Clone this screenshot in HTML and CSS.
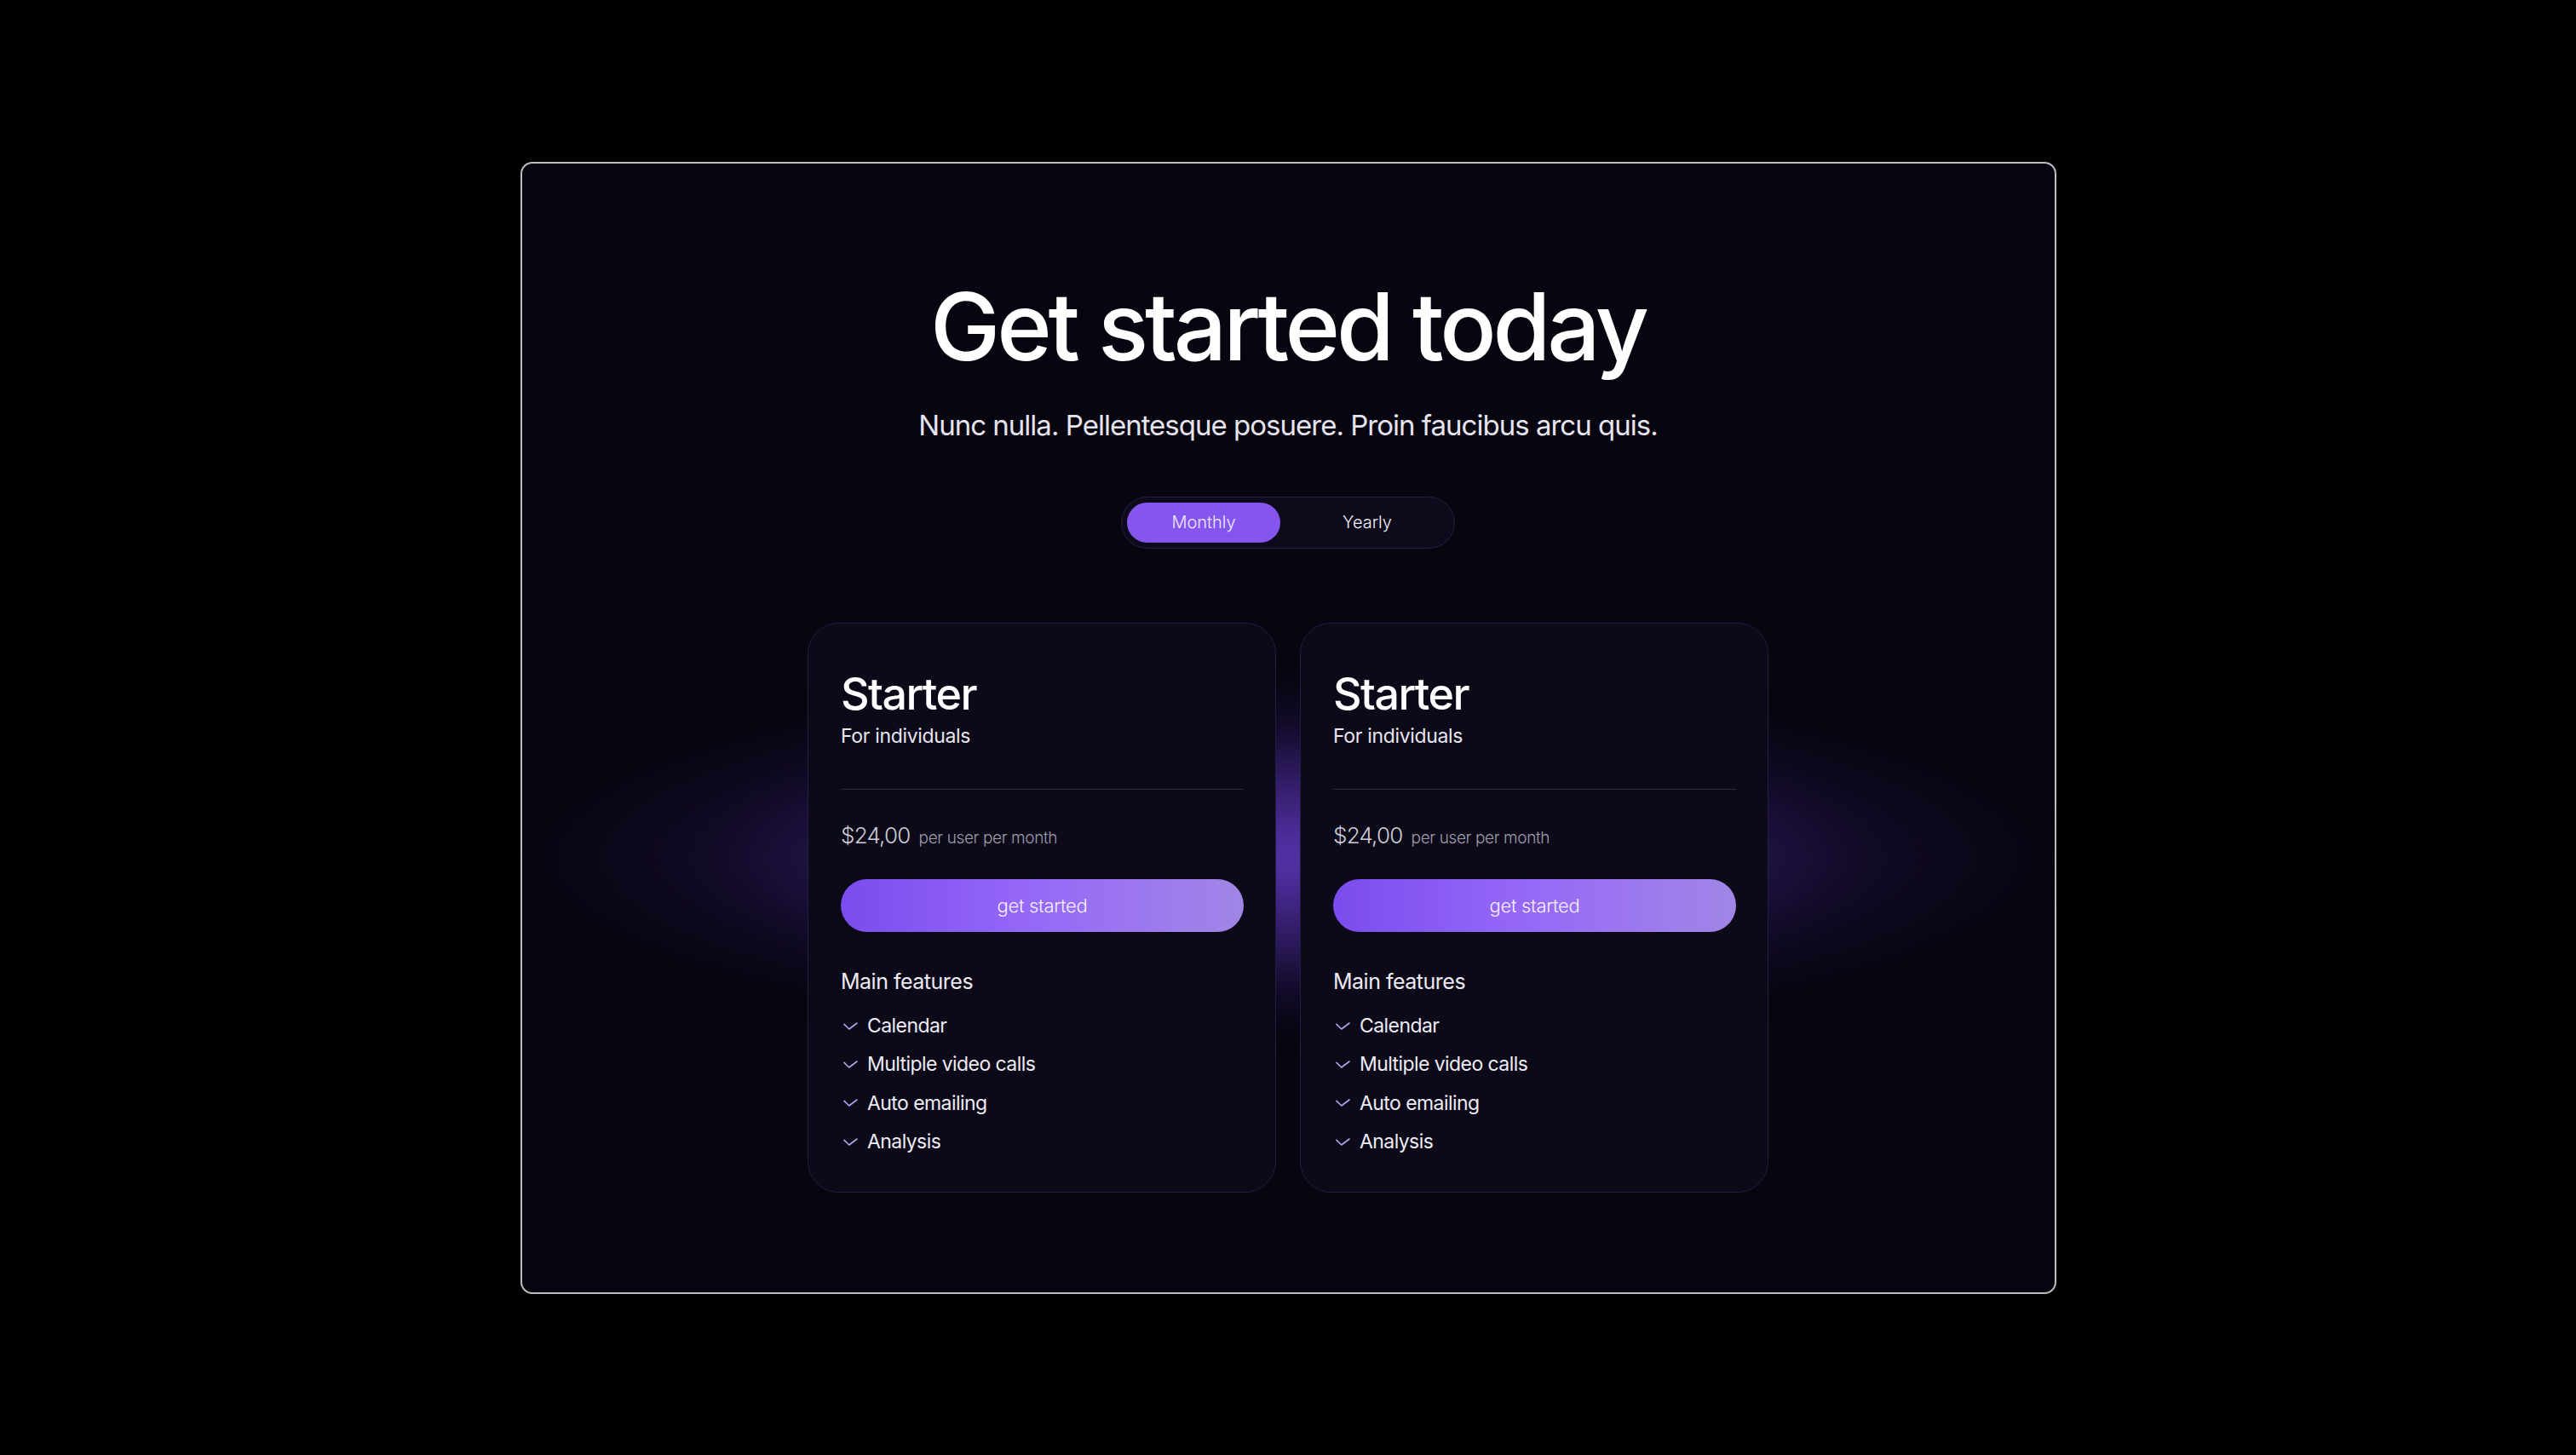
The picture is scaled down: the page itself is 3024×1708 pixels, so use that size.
FILE: index.html
```html
<!DOCTYPE html>
<html lang="en">
<head>
<meta charset="utf-8">
<title>Pricing</title>
<link rel="stylesheet" href="styles.css">
</head>
<body>
<main class="frame">
  <h1 class="title">Get started today</h1>
  <p class="subtitle">Nunc nulla. Pellentesque posuere. Proin faucibus arcu quis.</p>
  <div class="toggle">
    <button class="toggle-btn active">Monthly</button>
    <button class="toggle-btn">Yearly</button>
  </div>
  <section class="plans">
    <div class="glow"></div>
    <article class="card">
      <h2 class="plan-name">Starter</h2>
      <p class="plan-for">For individuals</p>
      <hr class="divider">
      <p class="price"><span class="amount">$24,00</span><span class="per">per user per month</span></p>
      <button class="cta">get started</button>
      <h3 class="features-title">Main features</h3>
      <ul class="features">
        <li><svg class="check" viewBox="0 0 17 10"><polyline points="1,2.4 6.8,8 16,1"/></svg>Calendar</li>
        <li><svg class="check" viewBox="0 0 17 10"><polyline points="1,2.4 6.8,8 16,1"/></svg>Multiple video calls</li>
        <li><svg class="check" viewBox="0 0 17 10"><polyline points="1,2.4 6.8,8 16,1"/></svg>Auto emailing</li>
        <li><svg class="check" viewBox="0 0 17 10"><polyline points="1,2.4 6.8,8 16,1"/></svg>Analysis</li>
      </ul>
    </article>
    <article class="card">
      <h2 class="plan-name">Starter</h2>
      <p class="plan-for">For individuals</p>
      <hr class="divider">
      <p class="price"><span class="amount">$24,00</span><span class="per">per user per month</span></p>
      <button class="cta">get started</button>
      <h3 class="features-title">Main features</h3>
      <ul class="features">
        <li><svg class="check" viewBox="0 0 17 10"><polyline points="1,2.4 6.8,8 16,1"/></svg>Calendar</li>
        <li><svg class="check" viewBox="0 0 17 10"><polyline points="1,2.4 6.8,8 16,1"/></svg>Multiple video calls</li>
        <li><svg class="check" viewBox="0 0 17 10"><polyline points="1,2.4 6.8,8 16,1"/></svg>Auto emailing</li>
        <li><svg class="check" viewBox="0 0 17 10"><polyline points="1,2.4 6.8,8 16,1"/></svg>Analysis</li>
      </ul>
    </article>
  </section>
</main>
</body>
</html>
```
FILE: styles.css
```css
* { box-sizing: border-box; }
html, body { margin: 0; padding: 0; background: #000; }
body {
  font-family: "Inter", "Noto Sans", sans-serif;
  color: #fff;
  height: 1708px;
  overflow: hidden;
}
.frame {
  width: 1803px;
  height: 1329px;
  margin: 190px auto 0;
  border: 2px solid #bdbcc2;
  border-radius: 14px;
  background: #07050f;
  display: flex;
  flex-direction: column;
  align-items: center;
  padding-top: 136px;
}
.title {
  margin: 0;
  font-size: 110px;
  line-height: 1;
  font-weight: 500;
  letter-spacing: -0.038em;
  height: 110px;
}
.subtitle {
  margin: 42px 0 0;
  font-size: 33px;
  line-height: 1.2;
  font-weight: 400;
  color: #e6e4ee;
  letter-spacing: -0.03em;
}
.toggle {
  margin-top: 63px;
  width: 392px;
  height: 61px;
  border: 1.5px solid #272144;
  border-radius: 31px;
  background: #0d0a1b;
  padding: 6px;
  display: grid;
  grid-template-columns: 180px 1fr;
}
.toggle-btn {
  border: 0;
  background: transparent;
  color: #f2f0fa;
  font-family: inherit;
  font-size: 20px;
  font-weight: 300;
  border-radius: 24px;
  padding: 0;
}
.toggle-btn + .toggle-btn { padding-left: 6px; }
.toggle-btn.active {
  background: #8556ee;
  color: #efe9ff;
}
.plans {
  position: relative;
  margin-top: 87px;
  display: flex;
  gap: 28px;
}
.glow {
  position: absolute;
  left: 50%;
  top: 275px;
  width: 1820px;
  height: 420px;
  transform: translate(-50%, -50%);
  background: radial-gradient(ellipse closest-side at center,
    rgba(110, 66, 220, 0.78) 0%,
    rgba(92, 52, 190, 0.48) 45%,
    rgba(60, 30, 130, 0.2) 75%,
    rgba(30, 15, 70, 0) 100%);
  filter: blur(20px);
  pointer-events: none;
}
.card {
  position: relative;
  width: 550px;
  height: 669px;
  border: 1px solid #231d42;
  border-radius: 36px;
  background: #0c0919;
  padding: 54px 37px 0 38px;
}
.plan-name {
  margin: 0;
  font-size: 52px;
  line-height: 1.1;
  font-weight: 500;
  letter-spacing: -0.03em;
}
.plan-for {
  margin: 7px 0 0;
  font-size: 23px;
  line-height: 1.3;
  font-weight: 400;
  color: #e8e6f0;
  letter-spacing: -0.015em;
}
.divider {
  margin: 46px 0 0;
  border: 0;
  height: 1px;
  background: #2c2840;
}
.price {
  margin: 37px 0 0;
  line-height: 1.3;
  display: flex;
  align-items: baseline;
  gap: 10px;
}
.amount {
  font-size: 26px;
  font-weight: 300;
  color: #cfcdd8;
  letter-spacing: -0.03em;
}
.per {
  font-size: 19px;
  font-weight: 300;
  color: #a09eae;
  letter-spacing: -0.02em;
}
.cta {
  display: block;
  width: 100%;
  margin-top: 35px;
  height: 62px;
  border: 0;
  border-radius: 31px;
  background: linear-gradient(90deg, #7b4ced 0%, #9467f8 45%, #9c78ef 75%, #a086e6 100%);
  color: #f4efff;
  font-family: inherit;
  font-size: 22px;
  font-weight: 300;
  letter-spacing: -0.015em;
}
.features-title {
  margin: 42px 0 0;
  font-size: 25px;
  line-height: 1.3;
  font-weight: 400;
  color: #eceaf2;
  letter-spacing: -0.02em;
}
.features {
  list-style: none;
  margin: 20px 0 0;
  padding: 0;
  display: flex;
  flex-direction: column;
  gap: 14px;
}
.features li {
  display: flex;
  align-items: center;
  font-size: 23px;
  line-height: 31.3px;
  font-weight: 400;
  color: #eeecf4;
  letter-spacing: -0.025em;
}
.check {
  width: 17px;
  height: 10px;
  margin: 0 11px 0 3px;
  fill: none;
  stroke: #b3a4ec;
  stroke-width: 1.6;
  stroke-linecap: round;
  stroke-linejoin: round;
}
```
